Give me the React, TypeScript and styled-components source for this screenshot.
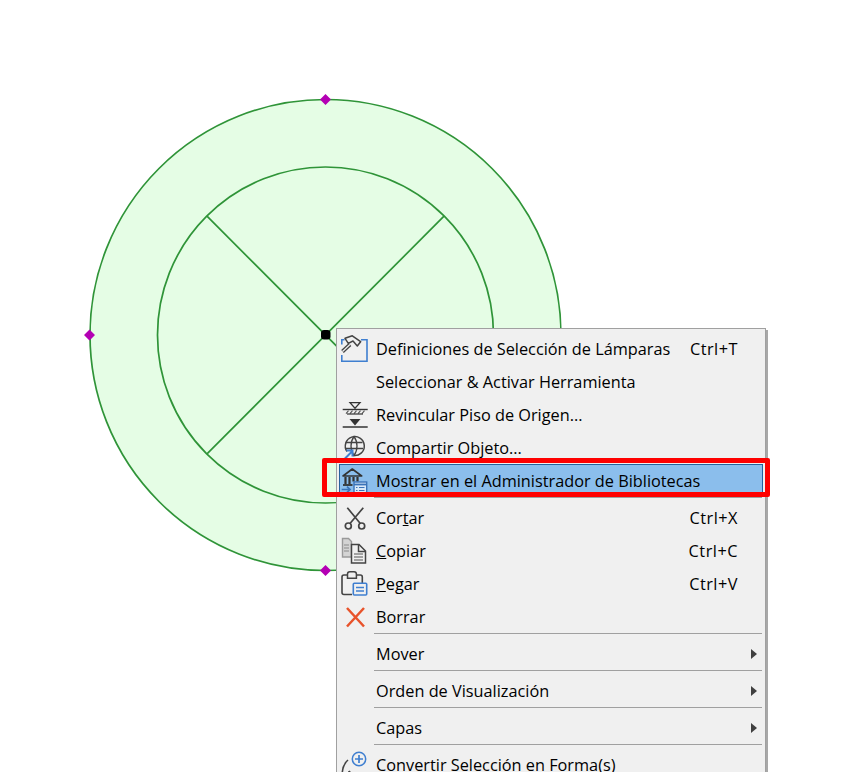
import React from "react";
import styled, { createGlobalStyle } from "styled-components";

const Global = createGlobalStyle`
  html, body { margin: 0; padding: 0; background: #fff; }
  body { font-family: "Open Sans", "Noto Sans", sans-serif; }
`;

const HammerIcon = () => (
  <svg width="28" height="28" viewBox="0 0 28 28" fill="none">
    <path d="M0.800 9.500V4.700H3.500M20 4.700H26V26.200H0.800V20" stroke="#3f7fd0" strokeWidth="1.600" />
    <path d="M1.500 16.500L9 9.500" stroke="#444" strokeWidth="3.800" />
    <path d="M1.500 16.500L9 9.500" stroke="#f0f0f0" strokeWidth="1.200" />
    <path d="M4 3.300L11.300 0.800 19.600 6.700 16.300 11 12 6 7.300 8.300Z" fill="#f0f0f0" stroke="#444" strokeWidth="1.500" strokeLinejoin="round" />
  </svg>
);

const RelinkIcon = () => (
  <svg width="28" height="28" viewBox="0 0 26 28" fill="none">
    <path d="M8 1.700h10l-5 5.600z" fill="#f0f0f0" stroke="#333" strokeWidth="1.300" />
    <path d="M0.700 8.500h25" stroke="#333" strokeWidth="1.400" />
    <path d="M4 12.700l2.500-3M8 12.700l2.500-3M12 12.700l2.500-3M16 12.700l2.500-3M20 12.700l2.500-3" stroke="#555" strokeWidth="1.100" />
    <path d="M5 13h16" stroke="#333" strokeWidth="1.200" />
    <path d="M7.500 18h11L13 24.500z" fill="#333" />
    <path d="M0.700 26h25" stroke="#333" strokeWidth="1.500" />
  </svg>
);

const GlobeIcon = () => (
  <svg width="28" height="28" viewBox="0 0 28 28" fill="none">
    <path d="M6 17.500A9.500 9.500 0 1 1 12 21.400" stroke="#444" strokeWidth="1.500" />
    <path d="M13 2.500C9 8 9 16 13 21.500C17 16 17 8 13 2.500Z" stroke="#444" strokeWidth="1.300" />
    <path d="M4.500 8.500h17M4 14.500h18" stroke="#444" strokeWidth="1.300" />
    <path d="M3 25.500l8-8M5.500 16.500h6v6" stroke="#3f7fd0" strokeWidth="2" />
  </svg>
);

const LibraryIcon = () => (
  <svg width="28" height="28" viewBox="0 0 28 28" fill="none">
    <path d="M2 9L11.300 2 20.700 9z" fill="#8bbeec" stroke="#333" strokeWidth="1.600" strokeLinejoin="round" />
    <path d="M4.500 10v7M8.500 10v7M12.500 10v4.500M16.500 10v4.500" stroke="#333" strokeWidth="2.200" />
    <path d="M2 18h9.500" stroke="#333" strokeWidth="1.800" />
    <path d="M0.700 22.500h8M6 19.700l3 2.800-3 2.800" stroke="#3a73b8" strokeWidth="1.700" />
    <rect x="13" y="15" width="12.700" height="11" fill="#d8e8f8" stroke="#3a73b8" strokeWidth="1.400" />
    <path d="M13 17.500h12.700" stroke="#3a73b8" strokeWidth="1.800" />
    <path d="M15 20.500h1.500M18 20.500h5.500M15 23.500h1.500M18 23.500h5.500" stroke="#3a73b8" strokeWidth="1.200" />
  </svg>
);

const ScissorsIcon = () => (
  <svg width="24" height="24" viewBox="0 0 24 24" fill="none">
    <path d="M4.300 1.700L17.300 17.500M20.300 1.700L7 17.500" stroke="#444" strokeWidth="1.700" />
    <circle cx="5.300" cy="20" r="3" stroke="#444" strokeWidth="1.700" />
    <circle cx="18.700" cy="20" r="3" stroke="#444" strokeWidth="1.700" />
  </svg>
);

const CopyIcon = () => (
  <svg width="28" height="28" viewBox="0 0 28 28" fill="none">
    <path d="M1.500 1.500h6l3 3V20h-9z" fill="#d4d4d4" stroke="#9a9a9a" strokeWidth="1.400" />
    <path d="M3 8h5M3 11h5M3 14h5" stroke="#8a8a8a" />
    <path d="M10.500 7.500h7.500l6.500 6.500V26H10.500z" fill="#f0f0f0" stroke="#444" strokeWidth="1.500" />
    <path d="M17.500 7.500v7h7" stroke="#444" strokeWidth="1.500" />
    <path d="M13 17h9M13 20h9M13 23h9" stroke="#555" strokeWidth="1.200" />
  </svg>
);

const PasteIcon = () => (
  <svg width="28" height="28" viewBox="0 0 28 28" fill="none">
    <path d="M11 24.500H3a2 2 0 0 1-2-2V7a2 2 0 0 1 2-2h16.300a2 2 0 0 1 2 2v6" stroke="#444" strokeWidth="1.600" />
    <path d="M6.500 8.300V4a2.300 2.300 0 0 1 2.300-2.300h4.300a2.300 2.300 0 0 1 2.300 2.300v4.300z" fill="#f0f0f0" stroke="#444" strokeWidth="1.500" />
    <rect x="12.300" y="13.300" width="13.400" height="11.700" rx="1" fill="#f0f0f0" stroke="#3f7fd0" strokeWidth="1.600" />
    <path d="M15 17.500h8M15 21h8" stroke="#3f7fd0" strokeWidth="1.600" />
  </svg>
);

const CrossIcon = () => (
  <svg width="22" height="22" viewBox="0 0 22 22" fill="none">
    <path d="M3 2l17 18.500M20 2L3 20.500" stroke="#e8532b" strokeWidth="2.500" />
  </svg>
);

const ConvertIcon = () => (
  <svg width="28" height="28" viewBox="0 0 28 28" fill="none">
    <circle cx="18" cy="8" r="6.700" fill="#f0f0f0" stroke="#3f7fd0" strokeWidth="1.500" />
    <path d="M14 8h8M18 4v8" stroke="#3f7fd0" strokeWidth="1.700" />
    <path d="M7 9C2.500 13 0.500 20 1.500 28" stroke="#444" strokeWidth="1.600" />
    <path d="M8 20l4.500 5.500M8 20v8" stroke="#444" strokeWidth="1.600" />
  </svg>
);

type Item =
  | { kind: "sep" }
  | {
      kind?: "item";
      label: React.ReactNode;
      icon?: React.ReactNode;
      shortcut?: string;
      sub?: boolean;
      active?: boolean;
    };

const items: Item[] = [
  { label: "Definiciones de Selección de Lámparas", icon: <HammerIcon />, shortcut: "Ctrl+T" },
  { label: "Seleccionar & Activar Herramienta" },
  { label: "Revincular Piso de Origen...", icon: <RelinkIcon /> },
  { label: "Compartir Objeto...", icon: <GlobeIcon /> },
  { label: "Mostrar en el Administrador de Bibliotecas", icon: <LibraryIcon />, active: true },
  { kind: "sep" },
  { label: <>Cor<u>t</u>ar</>, icon: <ScissorsIcon />, shortcut: "Ctrl+X" },
  { label: <><u>C</u>opiar</>, icon: <CopyIcon />, shortcut: "Ctrl+C" },
  { label: <><u>P</u>egar</>, icon: <PasteIcon />, shortcut: "Ctrl+V" },
  { label: "Borrar", icon: <CrossIcon /> },
  { kind: "sep" },
  { label: "Mover", sub: true },
  { kind: "sep" },
  { label: "Orden de Visualización", sub: true },
  { kind: "sep" },
  { label: "Capas", sub: true },
  { kind: "sep" },
  { label: "Convertir Selección en Forma(s)", icon: <ConvertIcon /> },
];

export default function App() {
  return (
    <Page>
      <Global />
      <Canvas viewBox="0 0 850 772" width="850" height="772">
        <circle cx="325.500" cy="335" r="235.500" fill="#e5fde5" stroke="#2f9438" strokeWidth="1.700" />
        <circle cx="325.500" cy="335" r="168" fill="none" stroke="#2f9438" strokeWidth="1.700" />
        <path d="M207 216.200L444 453.800M444 216.200L207 453.800" stroke="#2f9438" strokeWidth="1.700" />
        <path d="M325.500 94l5.500 5.500-5.500 5.500-5.500-5.500zM89.500 329.500l5.500 5.500-5.500 5.500-5.500-5.500zM325.500 565l5.500 5.500-5.500 5.500-5.500-5.500z" fill="#b400b4" />
        <rect x="321" y="330" width="9.500" height="9.500" rx="3" fill="#000" />
      </Canvas>
      <Menu>
        {items.map((item, i) =>
          item.kind === "sep" ? (
            <Separator key={i} />
          ) : (
            <Row key={i} $active={item.active}>
              <IconSlot>{item.icon}</IconSlot>
              <Label>{item.label}</Label>
              {item.shortcut && <Shortcut>{item.shortcut}</Shortcut>}
              {item.sub && <SubArrow />}
              {item.active && <RedFrame />}
            </Row>
          )
        )}
      </Menu>
    </Page>
  );
}

const Page = styled.div`
  position: relative;
  width: 850px;
  height: 772px;
  overflow: hidden;
  background: #fff;
`;

const Canvas = styled.svg`
  position: absolute;
  inset: 0;
  display: block;
`;

const Menu = styled.div`
  position: absolute;
  left: 336px;
  top: 328px;
  box-sizing: border-box;
  width: 430px;
  padding: 3px 0;
  background: #f0f0f0;
  border: 1px solid #a0a0a0;
  box-shadow: 2px 2px 0 #a8a8a8;
`;

const Row = styled.div<{ $active?: boolean }>`
  position: relative;
  display: flex;
  align-items: center;
  height: 33px;
  margin: 0 2px;
  color: #000;
  background: ${({ $active }) => ($active ? "#8bbeec" : "transparent")};
  box-shadow: ${({ $active }) => ($active ? "inset 0 0 0 1px #26629c" : "none")};
`;

const IconSlot = styled.div`
  flex: 0 0 37px;
  box-sizing: border-box;
  padding-right: 5px;
  display: flex;
  align-items: center;
  justify-content: center;
  height: 33px;
`;

const Label = styled.span`
  flex: 1;
  font-size: 16.300px;
  white-space: nowrap;
`;

const Shortcut = styled.span`
  margin-right: 25px;
  font-size: 16.300px;
  letter-spacing: 0.5px;
  white-space: nowrap;
`;

const SubArrow = styled.span`
  width: 0;
  height: 0;
  margin-right: 6px;
  border-left: 6px solid #404040;
  border-top: 5px solid transparent;
  border-bottom: 5px solid transparent;
`;

const RedFrame = styled.span`
  position: absolute;
  left: -17px;
  right: -7px;
  top: -6px;
  bottom: 0;
  border: 5px solid #fe0000;
  border-radius: 2px;
`;

const Separator = styled.div`
  height: 1px;
  margin: 0 3px 3px 37px;
  background: #a0a0a0;
`;
